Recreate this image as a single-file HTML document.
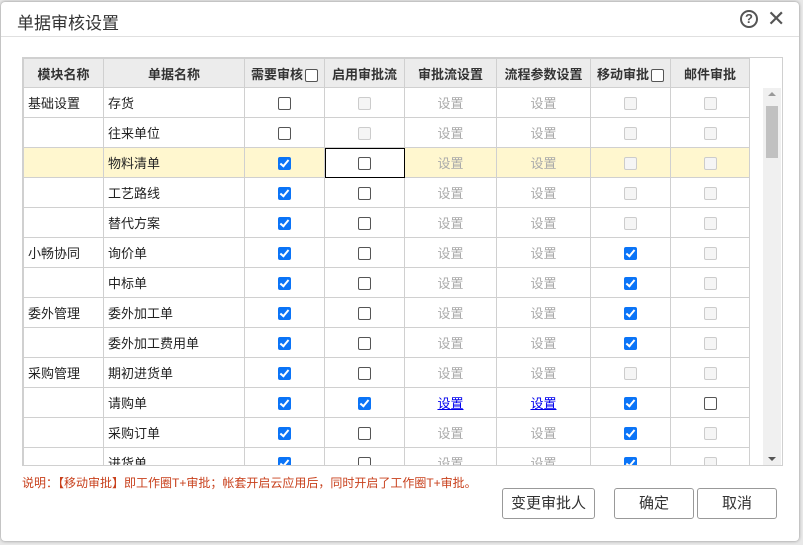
<!DOCTYPE html><html><head><meta charset="utf-8"><style>
body{margin:0;width:803px;height:545px;background:#e8e8e8;font-family:"Liberation Sans","Noto Sans CJK SC",sans-serif;position:relative;overflow:hidden}
.dlg{position:absolute;left:1px;top:2px;width:798px;height:539px;background:#fff;border-radius:4px;box-shadow:0 0 3px rgba(0,0,0,.4)}
.title{position:absolute;left:16px;top:7px;font-size:17px;color:#333}
.sep{position:absolute;left:0;right:0;top:34px;border-top:1px solid #e0e0e0}
.wrap{position:absolute;left:21px;top:55px;width:759px;height:407px;border:1px solid #d0d0d0;overflow:hidden}
table{border-collapse:collapse;table-layout:fixed;position:absolute;left:0;top:0}
td,th{border:1px solid #d0d0d0;height:29px;padding:0;font-size:13px;color:#222;text-align:center}
th{background:#ececec;font-weight:bold;color:#333;height:28px}
td.l{text-align:left;padding-left:4px}
tr.hl td{background:#fff7cf}
.g{color:#aaa}
a{color:#0000ee;text-decoration:underline}
.cb{display:inline-block;width:11px;height:11px;border:1px solid #555;border-radius:2px;vertical-align:middle;background:#fff;position:relative}
.cb.d{border-color:#ccc;background:#f5f5f5}
.cb.c{background:#0b74f7;border-color:#0b74f7}
.cb.c:after{content:"";position:absolute;left:3px;top:0px;width:3px;height:7px;border:solid #fff;border-width:0 2px 2px 0;transform:rotate(40deg)}
.sb{position:absolute;left:740px;top:30px;width:18px;height:377px;background:#f0f0f0}
.th{position:absolute;left:3px;top:18px;width:12px;height:52px;background:#c1c1c1}
.note{position:absolute;left:21px;top:472px;font-size:12px;color:#c8401c}
.btn{position:absolute;top:486px;height:29px;border:1px solid #999;border-radius:3px;background:#fff;font-size:15px;color:#333;text-align:center;line-height:29px}
.ic{position:absolute;top:8px;font-size:18px;color:#555;font-weight:bold}
</style></head><body>
<div class="dlg">
<div class="title">单据审核设置</div>
<div class="ic" style="left:739px;border:2px solid #555;border-radius:50%;font-size:13px;line-height:14px;text-align:center;top:8px;width:14px;height:14px">?</div>
<div class="ic" style="left:766px;top:4px;font-size:22px;font-weight:normal">✕</div>
<div class="sep"></div>
<div class="wrap">
<table>
<colgroup><col style="width:80px"><col style="width:141px"><col style="width:80px"><col style="width:80px"><col style="width:92px"><col style="width:94px"><col style="width:80px"><col style="width:79px"></colgroup>
<tr><th>模块名称</th><th>单据名称</th><th>需要审核<span class="cb" style="margin-left:2px"></span></th><th>启用审批流</th><th>审批流设置</th><th>流程参数设置</th><th>移动审批<span class="cb" style="margin-left:2px"></span></th><th>邮件审批</th></tr>
<tr><td class="l">基础设置</td><td class="l">存货</td><td><span class="cb"></span></td><td><span class="cb d"></span></td><td class="g">设置</td><td class="g">设置</td><td><span class="cb d"></span></td><td><span class="cb d"></span></td></tr>
<tr><td></td><td class="l">往来单位</td><td><span class="cb"></span></td><td><span class="cb d"></span></td><td class="g">设置</td><td class="g">设置</td><td><span class="cb d"></span></td><td><span class="cb d"></span></td></tr>
<tr class="hl"><td></td><td class="l">物料清单</td><td><span class="cb c"></span></td><td style="background:#fff;outline:1px solid #000;outline-offset:-1px"><span class="cb"></span></td><td class="g">设置</td><td class="g">设置</td><td><span class="cb d"></span></td><td><span class="cb d"></span></td></tr>
<tr><td></td><td class="l">工艺路线</td><td><span class="cb c"></span></td><td><span class="cb"></span></td><td class="g">设置</td><td class="g">设置</td><td><span class="cb d"></span></td><td><span class="cb d"></span></td></tr>
<tr><td></td><td class="l">替代方案</td><td><span class="cb c"></span></td><td><span class="cb"></span></td><td class="g">设置</td><td class="g">设置</td><td><span class="cb d"></span></td><td><span class="cb d"></span></td></tr>
<tr><td class="l">小畅协同</td><td class="l">询价单</td><td><span class="cb c"></span></td><td><span class="cb"></span></td><td class="g">设置</td><td class="g">设置</td><td><span class="cb c"></span></td><td><span class="cb d"></span></td></tr>
<tr><td></td><td class="l">中标单</td><td><span class="cb c"></span></td><td><span class="cb"></span></td><td class="g">设置</td><td class="g">设置</td><td><span class="cb c"></span></td><td><span class="cb d"></span></td></tr>
<tr><td class="l">委外管理</td><td class="l">委外加工单</td><td><span class="cb c"></span></td><td><span class="cb"></span></td><td class="g">设置</td><td class="g">设置</td><td><span class="cb c"></span></td><td><span class="cb d"></span></td></tr>
<tr><td></td><td class="l">委外加工费用单</td><td><span class="cb c"></span></td><td><span class="cb"></span></td><td class="g">设置</td><td class="g">设置</td><td><span class="cb c"></span></td><td><span class="cb d"></span></td></tr>
<tr><td class="l">采购管理</td><td class="l">期初进货单</td><td><span class="cb c"></span></td><td><span class="cb"></span></td><td class="g">设置</td><td class="g">设置</td><td><span class="cb d"></span></td><td><span class="cb d"></span></td></tr>
<tr><td></td><td class="l">请购单</td><td><span class="cb c"></span></td><td><span class="cb c"></span></td><td><a>设置</a></td><td><a>设置</a></td><td><span class="cb c"></span></td><td><span class="cb"></span></td></tr>
<tr><td></td><td class="l">采购订单</td><td><span class="cb c"></span></td><td><span class="cb"></span></td><td class="g">设置</td><td class="g">设置</td><td><span class="cb c"></span></td><td><span class="cb d"></span></td></tr>
<tr><td></td><td class="l">进货单</td><td><span class="cb c"></span></td><td><span class="cb"></span></td><td class="g">设置</td><td class="g">设置</td><td><span class="cb c"></span></td><td><span class="cb d"></span></td></tr>
</table>
<div class="sb"><div style="position:absolute;left:5px;top:4px;border:4px solid transparent;border-bottom:4px solid #999;border-top:0"></div><div class="th"></div><div style="position:absolute;left:5px;bottom:4px;border:4px solid transparent;border-top:4px solid #555;border-bottom:0"></div></div>
</div>
<div class="note">说明：【移动审批】即工作圈T+审批；帐套开启云应用后，同时开启了工作圈T+审批。</div>
<div class="btn" style="left:501px;width:91px">变更审批人</div>
<div class="btn" style="left:613px;width:78px">确定</div>
<div class="btn" style="left:696px;width:78px">取消</div>
</div>
</body></html>
